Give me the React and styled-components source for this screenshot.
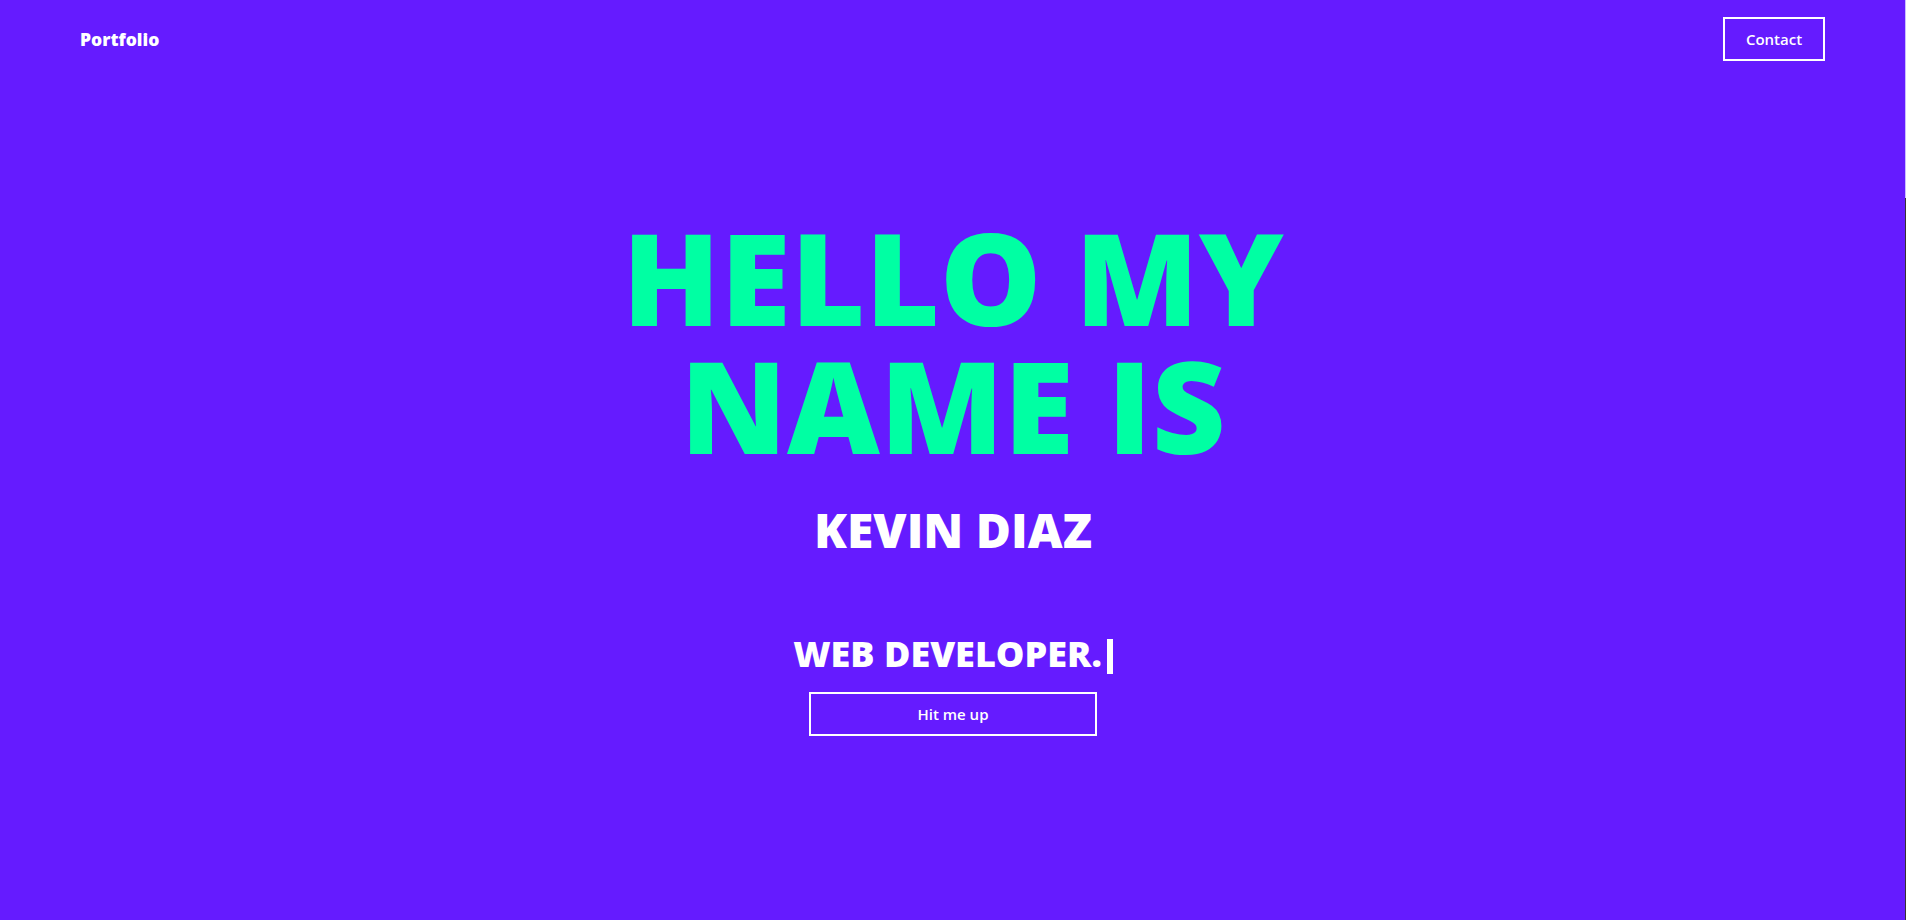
import styled, { createGlobalStyle } from 'styled-components';

const GlobalStyle = createGlobalStyle`
    html, body {
        margin: 0;
        padding: 0;
        background: #651bff;
    }
    * {
        box-sizing: border-box;
    }
`;

const Page = styled.div`
    min-height: 100vh;
    background: #651bff;
    color: #fff;
    font-family: 'Open Sans', 'Noto Sans', sans-serif;
    display: flex;
    flex-direction: column;
`;

const Nav = styled.header`
    display: flex;
    align-items: center;
    justify-content: space-between;
    padding: 17px 81px 0 80px;
`;

const Brand = styled.a`
    font-weight: 800;
    font-size: 17.5px;
    color: #fff;
    text-decoration: none;
`;

const OutlineButton = styled.button`
    background: transparent;
    border: 2px solid #fff;
    color: #fff;
    font-family: 'Open Sans', sans-serif;
    font-weight: 600;
    font-size: 15px;
    width: ${(p) => p.$width}px;
    height: 44px;
    padding: 0;
    cursor: pointer;
`;

const Hero = styled.main`
    display: flex;
    flex-direction: column;
    align-items: center;
    padding-top: 152px;
`;

const Title = styled.h1`
    margin: 0;
    width: 720px;
    font-weight: 800;
    font-size: 128px;
    line-height: 128px;
    color: #00ffa3;
    text-align: center;
`;

const Name = styled.h2`
    margin: 31px 0 0;
    font-weight: 800;
    font-stretch: 94%;
    font-size: 48px;
    line-height: 60px;
`;

const Role = styled.h3`
    margin: 72px 0 0;
    font-weight: 800;
    font-stretch: 94%;
    font-size: 36px;
    line-height: 44px;
    display: flex;
    align-items: center;
`;

const Cursor = styled.span`
    display: inline-block;
    width: 6px;
    height: 35px;
    background: #fff;
    margin: 4px 0 0 5px;
`;

const HitRow = styled.div`
    margin-top: 16px;
`;

/* thin scrollbar edge visible at the right of the viewport */
const ScrollEdge = styled.div`
    position: fixed;
    top: 0;
    right: 0;
    width: 1px;
    height: 100vh;
    background: linear-gradient(#cbbcff 0 198px, #3a3036 198px);
`;

export default function App() {
    return (
        <Page>
            <GlobalStyle />
            <Nav>
                <Brand href="#">Portfolio</Brand>
                <OutlineButton $width={102}>Contact</OutlineButton>
            </Nav>
            <Hero>
                <Title>HELLO MY NAME IS</Title>
                <Name>KEVIN DIAZ</Name>
                <Role>
                    WEB DEVELOPER.
                    <Cursor />
                </Role>
                <HitRow>
                    <OutlineButton $width={288}>Hit me up</OutlineButton>
                </HitRow>
            </Hero>
            <ScrollEdge />
        </Page>
    );
}
